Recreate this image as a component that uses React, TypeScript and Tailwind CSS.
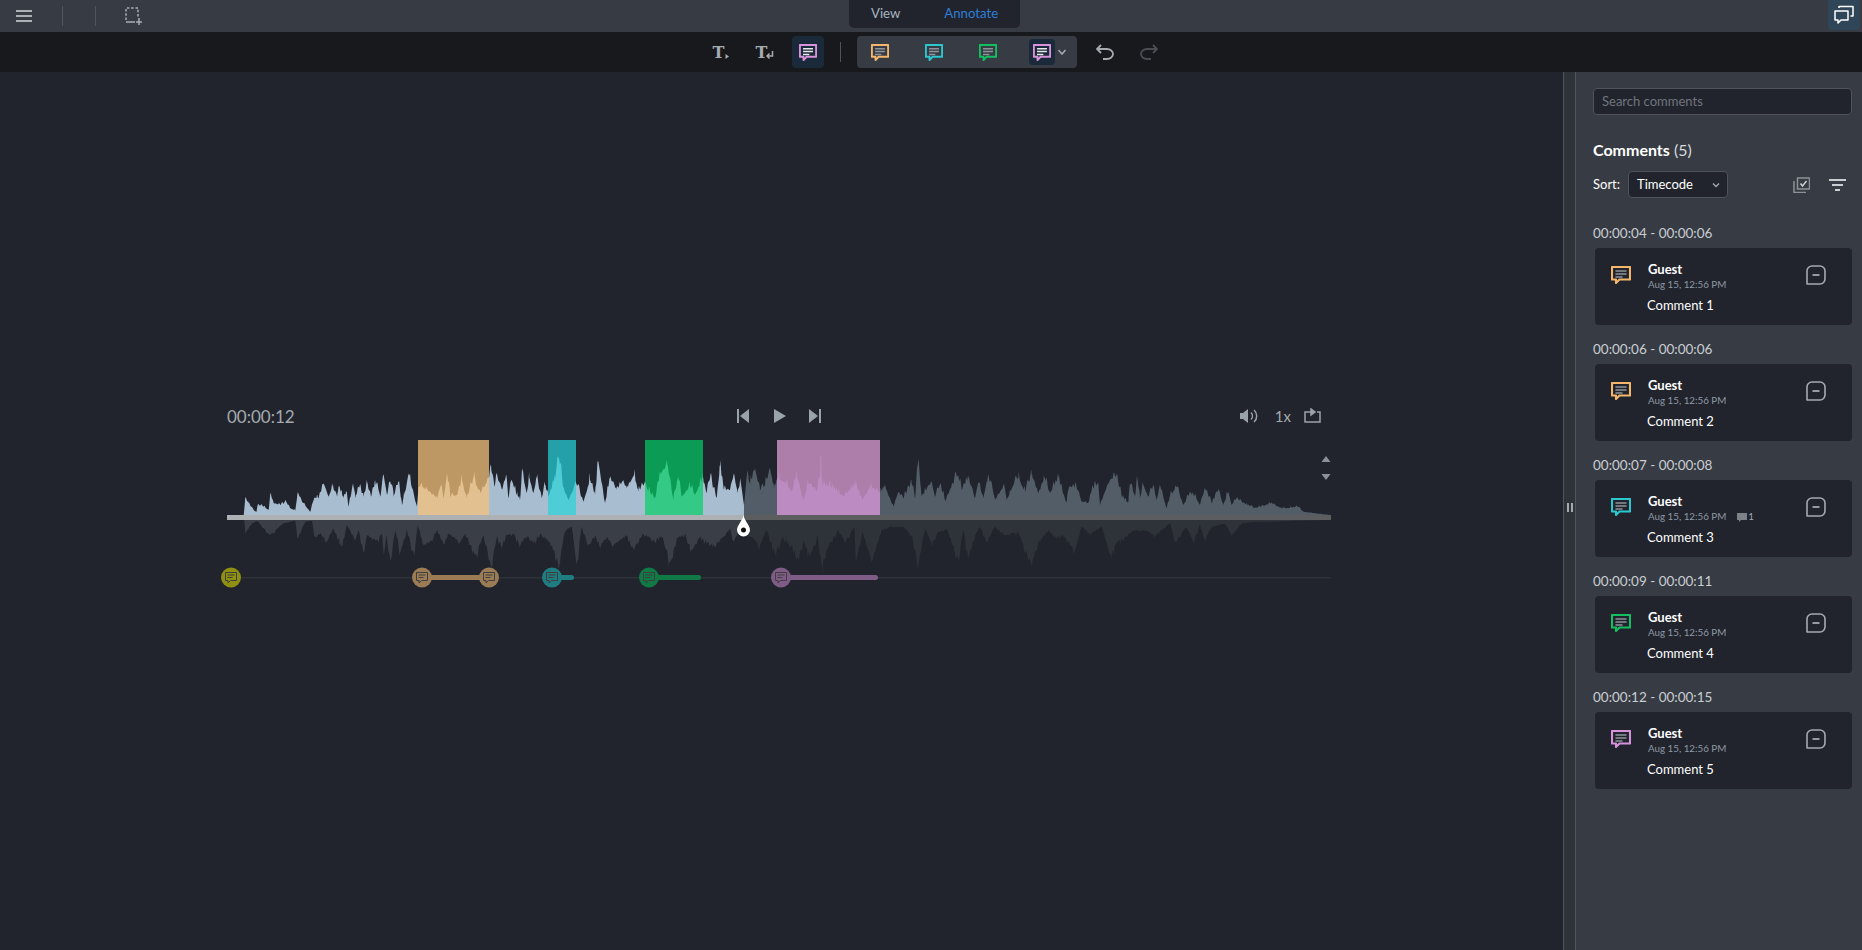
import { useMemo } from "react";

// comment list shown in the right panel
type CommentItem = {
  range: string;
  label: string;
  color: string;
  replies?: number;
};

const comments: CommentItem[] = [
  { range: "00:00:04 - 00:00:06", label: "Comment 1", color: "#f4b66a" },
  { range: "00:00:06 - 00:00:06", label: "Comment 2", color: "#f4b66a" },
  { range: "00:00:07 - 00:00:08", label: "Comment 3", color: "#2bc8d0", replies: 1 },
  { range: "00:00:09 - 00:00:11", label: "Comment 4", color: "#12c060" },
  { range: "00:00:12 - 00:00:15", label: "Comment 5", color: "#d892dc" },
];

const regions = [
  { x1: 418, x2: 489, top: "#bd9865", wave: "#e3c08f" },
  { x1: 548, x2: 576, top: "#23a0a8", wave: "#4fcdd6" },
  { x1: 645, x2: 703, top: "#0b9b54", wave: "#34c985" },
  { x1: 777, x2: 880, top: "#ad7eaa", wave: "#bb8bc1" },
];

const markers = [
  { x: 231, to: 231, color: "#8f8f10" },
  { x: 422, to: 488, color: "#9b7c55" },
  { x: 489, to: 489, color: "#9b7c55" },
  { x: 552, to: 574, color: "#1f7d82" },
  { x: 649, to: 701, color: "#0f7a45" },
  { x: 781, to: 878, color: "#7f5c86" },
];

const BASE = 515;
const PLAYHEAD = 744;

// wave outline, four stretches starting at the given x; pairs are [offset * 3, level * 3]
const topCrops: [number, number[]][] = [
  [227, [50,180,55,130,65,145,80,165,88,172,92,150,110,155,125,165,130,115,140,145,160,150,178,142,190,160,205,167,212,112,225,140,250,170,262,128,275,130,290,85,305,125,316,95,330,125,335,95,350,130,358,110,365,155,378,85,385,130,395,95,410,125,420,88,432,125,440,97,450,85,460,125,470,60,480,120,490,80,500,125,515,80,525,150,533,120,545,55,555,100,570,155,575,95,600,105,630,130,640,95,650,130,660,55,670,125,690,120,705,75,718,130,740,75,760,115,775,90,785,70,793,45,803,95,808,60,825,105,838,60]],
  [500, [25,130,35,75,50,120,60,135,67,50,80,115,88,68,100,115,110,70,125,130,135,90,145,125,165,70,178,15,190,100,205,135,215,115,228,85,250,140,270,75,285,120,295,18,315,145,330,70,350,105,368,80,380,100,402,60,415,110,435,85,445,110,465,130,480,60,502,30,520,135,535,65,545,125,570,95,585,120,608,70,620,115,630,70,650,130,660,35,672,105,690,105,702,55,712,115,722,80,732,150,740,65,750,90,765,40,780,105,795,95,810,40,822,100,832,70]],
  [775, [5,100,35,85,50,110,65,60,85,135,100,85,125,110,135,60,137,0,140,60,142,90,175,100,205,125,240,90,262,135,285,95,315,115,330,95,355,155,370,110,385,130,410,85,420,130,430,12,440,125,470,80,480,125,495,90,512,140,525,105,548,62,560,105,580,70,600,130,610,80,625,130,635,80,648,80,660,135,688,90,695,135,715,90,730,68,750,110,770,60,790,115,808,70,825,115,838,90]],
  [1055, [10,70,35,145,42,95,65,98,80,140,100,145,110,105,130,85,135,150,150,110,165,75,185,65,200,125,220,145,225,85,240,125,247,70,255,130,265,90,280,125,295,95,305,135,315,90,335,160,345,125,365,95,385,150,405,115,420,125,435,150,450,100,470,145,490,105,505,150,520,110,530,150,545,130,565,145,600,160,620,155,648,145,680,160,700,160,728,155,745,170,780,175,828,180]],
];

const bottomCrops: [number, number[]][] = [
  [227, [52,195,55,235,75,205,90,198,128,240,170,205,205,197,212,250,235,200,255,197,262,245,280,235,300,260,318,220,345,270,360,210,385,255,395,225,410,290,420,240,450,255,465,235,470,300,478,240,490,315,505,225,520,290,540,225,562,300,572,210,590,270,612,255,630,225,650,265,665,235,700,260,715,235,745,300,770,240,792,330,810,245,825,270,838,240]],
  [500, [40,235,60,265,80,240,100,260,120,235,150,260,178,325,195,225,215,215,230,330,245,215,265,270,285,240,300,270,320,245,340,270,380,240,400,280,430,235,460,255,485,240,512,320,530,250,555,235,575,285,600,245,640,270,670,245,690,220,700,260,720,225,760,250,780,270,800,225,825,290]],
  [775, [25,245,50,270,70,310,85,255,105,300,128,240,140,330,165,260,190,225,210,260,238,215,243,320,262,230,290,320,320,225,345,215,385,215,410,240,430,325,450,220,470,265,490,230,515,222,550,310,565,225,580,310,600,240,615,215,635,260,660,215,690,240,730,230,745,270,770,325,790,260,820,225,838,245]],
  [1055, [25,240,60,285,80,215,105,235,140,215,165,300,190,255,210,245,235,225,270,225,300,240,345,205,360,260,395,215,415,260,435,210,450,255,470,215,510,205,530,240,560,205,600,200,650,200,728,197,828,195]],
];

function rng(seed: number) {
  let a = seed;
  return () => {
    a = (a + 0x6d2b79f5) | 0;
    let t = Math.imul(a ^ (a >>> 15), 1 | a);
    t = (t + Math.imul(t ^ (t >>> 7), 61 | t)) ^ t;
    return ((t ^ (t >>> 14)) >>> 0) / 4294967296;
  };
}

function buildWave(crops: [number, number[]][], level: number, base: number, dir: number, seed: number) {
  const r = rng(seed);
  const pts: number[][] = [];
  let lastX = 0;
  crops.forEach(([x0, pairs]) => {
    for (let i = 0; i < pairs.length; i += 2) {
      const x = x0 + pairs[i] / 3;
      if (x > lastX) {
        pts.push([x, (dir * (level - pairs[i + 1])) / 3]);
        lastX = x;
      }
    }
  });
  let d = `M${pts[0][0].toFixed(1)} ${base}`;
  const tail = pts.length - 1;
  let toothStart = 0;
  let toothLen = 3;
  let toothAmp = 0;
  pts.forEach(([x, h], i) => {
    d += `L${x.toFixed(1)} ${(base - dir * h).toFixed(1)}`;
    if (i === tail) return;
    const [nx, nh] = pts[i + 1];
    const low = Math.min(h, nh);
    const high = Math.max(h, nh);
    for (let px = x + 0.5; px < nx; px += 0.5) {
      if (px - toothStart >= toothLen) {
        toothStart = px;
        toothLen = 1.5 + r() * 2.5;
        toothAmp = r();
      }
      const t = (px - x) / (nx - x);
      const up = nh > h ? t : 1 - t;
      const body = low + (high - low) * Math.pow(up, 1.1);
      // thin teeth so the outline stays spiky between the traced points
      const frac = (px - toothStart) / toothLen;
      const tooth = toothAmp * body * 0.3 * (1 - Math.abs(2 * frac - 1));
      d += `L${px.toFixed(2)} ${(base - dir * (body + tooth)).toFixed(1)}`;
    }
  });
  return d + `L1331 ${base}Z`;
}

function Bubble({
  color,
  lines = "#8f949a",
  w = 18,
  h = 17,
}: {
  color: string;
  lines?: string;
  w?: number;
  h?: number;
}) {
  return (
    <svg width={w} height={h} viewBox="0 0 20 18" fill="none" preserveAspectRatio="none">
      <path
        d="M1 1h18v12.500H8.500L5 17v-3.500H1Z"
        stroke={color}
        strokeWidth="2.100"
        strokeLinejoin="round"
      />
      <path d="M4.500 5h11M4.500 8h11M4.500 11h7" stroke={lines} strokeWidth="1.600" />
    </svg>
  );
}

function MinusBox() {
  return (
    <svg width="20" height="20" viewBox="0 0 20 20" fill="none" stroke="#a4aab0" strokeWidth="1.600">
      <path d="M1 19V6a5 5 0 0 1 5-5h8a5 5 0 0 1 5 5v8a5 5 0 0 1-5 5H1Z" strokeLinejoin="round" />
      <path d="M6.500 10h7" strokeWidth="1.800" />
    </svg>
  );
}

function CommentCard({ item }: { item: CommentItem }) {
  return (
    <div className="mb-[16px]">
      <div className="h-[23px] text-[13.5px] leading-[16px] text-[#c9ced3]">{item.range}</div>
      <div className="ml-[2px] flex h-[77px] w-[257px] rounded-[4px] bg-[#21242c] pl-[16px] pr-[26px] pt-[17px]">
        <div className="mt-[1px] w-[20px] shrink-0">
          <Bubble color={item.color} w={20} h={18} />
        </div>
        <div className="ml-[17px] mt-[-3px] flex-1">
          <div className="text-[13px] font-bold leading-[14px] text-white">Guest</div>
          <div className="mt-[2px] flex items-center text-[9.800px] leading-[13px] text-[#8e99a5]">
            <span>Aug 15, 12:56 PM</span>
            {item.replies ? (
              <span className="ml-[11px] flex items-center gap-[1px] text-[#a4aab0]">
                <svg width="10" height="10" viewBox="0 0 10 10" fill="#7d8288">
                  <path d="M0 1h10v7H4L2 10V8H0Z" />
                </svg>
                {item.replies}
              </span>
            ) : null}
          </div>
          <div className="ml-[-1px] mt-[6px] text-[13px] leading-[16px] text-white">{item.label}</div>
        </div>
        <MinusBox />
      </div>
    </div>
  );
}

function Waveform() {
  const top = useMemo(() => buildWave(topCrops, 180, BASE, 1, 11), []);
  const bottom = useMemo(() => buildWave(bottomCrops, 195, 520, -1, 29), []);
  return (
    <svg viewBox="227 431 1104 165" width="1104" height="165" className="block overflow-visible">
      <defs>
        <clipPath id="played">
          <rect x="227" y="431" width={PLAYHEAD - 227} height="165" />
        </clipPath>
        <clipPath id="rest">
          <rect x={PLAYHEAD} y="431" width={1331 - PLAYHEAD} height="165" />
        </clipPath>
        {regions.map((r, i) => (
          <clipPath id={`region-${i}`} key={r.x1}>
            <rect x={r.x1} y="440" width={r.x2 - r.x1} height="75" />
          </clipPath>
        ))}
      </defs>

      <path d={top} fill="#a9bdd0" clipPath="url(#played)" />
      <path d={top} fill="#525d68" clipPath="url(#rest)" />
      <path d={bottom} fill="#3a3f47" clipPath="url(#played)" />
      <path d={bottom} fill="#2e3239" clipPath="url(#rest)" />

      {regions.map((r, i) => (
        <g key={r.x1}>
          <rect x={r.x1} y="440" width={r.x2 - r.x1} height="75" fill={r.top} />
          <path d={top} fill={r.wave} clipPath={`url(#region-${i})`} />
        </g>
      ))}

      <rect x="227" y="515" width={PLAYHEAD - 227} height="5" fill="#aeb1b3" />
      <rect x={PLAYHEAD} y="515" width={1331 - PLAYHEAD} height="5" fill="#5b5d5e" />

      {/* playhead */}
      <path d="M743.500 515c1 6 6.500 10 6.500 15a6.500 6.500 0 0 1-13 0c0-5 5.500-9 6.500-15Z" fill="#fff" />
      <circle cx="743.500" cy="530" r="2.500" fill="#111" />

      {/* zoom arrows */}
      <path d="M1326 456l4.500 6h-9ZM1326 480l4.500-6h-9Z" fill="#8a9199" />

      {/* comment timeline */}
      <rect x="227" y="577" width="1104" height="1.500" fill="#2e3238" />
      {markers.map((m) => (
        <g key={m.x}>
          {m.to > m.x && <rect x={m.x} y="575" width={m.to - m.x} height="5" rx="2.500" fill={m.color} />}
          <circle cx={m.x} cy="577.500" r="10" fill={m.color} />
          <path
            d={`M${m.x - 5.500} ${572.500}h11v8h-6l-2.500 2.500v-2.500h-2.500Z M${m.x - 3.500} ${575}h7 M${m.x - 3.500} ${577.500}h5`}
            fill="none"
            stroke="#3f3f3f"
            strokeWidth="1"
          />
        </g>
      ))}
    </svg>
  );
}

export default function App() {
  return (
    <div className="flex h-[950px] w-[1862px] flex-col overflow-hidden bg-[#21242c] [font-family:Lato,sans-serif]">
      {/* top bar */}
      <div className="flex h-[32px] shrink-0 bg-[#373b43]">
        <div className="flex w-[849px] items-center pl-[16px]">
          <svg width="16" height="14" viewBox="0 0 16 14" fill="#aab0b6">
            <rect y="1" width="16" height="2" />
            <rect y="6" width="16" height="2" />
            <rect y="11" width="16" height="2" />
          </svg>
          <div className="ml-[30px] h-[20px] w-px bg-[#50545b]" />
          <div className="ml-[32px] h-[20px] w-px bg-[#50545b]" />
          <svg className="ml-[29px]" width="18" height="18" viewBox="0 0 18 18" fill="none" stroke="#aab0b6" strokeWidth="1.500">
            <path d="M1 13V1h12v9" strokeDasharray="2.500 1.800" />
            <path d="M1 15h9M14 11v7M11 15h6" />
          </svg>
        </div>
        <div className="flex h-[28px] w-[171px] items-center rounded-b-[5px] bg-[#21242c] pb-[1px] pl-[22px] text-[13.2px]">
          <span className="text-[#a7b4c2]">View</span>
          <span className="ml-[44px] text-[#2f7ed6]">Annotate</span>
        </div>
        <div className="flex flex-1 justify-end pr-[2px]">
          <div className="flex h-[30px] w-[32px] items-center justify-center rounded-b-[4px] bg-[#2f4558]">
            <svg width="20" height="20" viewBox="0 0 20 20" fill="none" stroke="#fff" strokeWidth="1.500">
              <path d="M1 6h13v9H7l-3 3v-3H1Z" strokeLinejoin="round" />
              <path d="M5 3V1.500h14V11h-2.500" strokeLinejoin="round" />
            </svg>
          </div>
        </div>
      </div>

      {/* annotate toolbar */}
      <div className="flex h-[40px] shrink-0 items-center bg-[#18191d] pl-[713px]">
        <svg className="overflow-visible" width="18" height="18" viewBox="0 0 18 18" fill="#a6abb0">
          <text x="-0.500" y="15" fontSize="16" fontWeight="bold" fontFamily="DejaVu Serif, serif">T</text>
          <path d="M12.500 11l3.500 2.500-3.500 2.500Z" />
        </svg>
        <svg className="ml-[25px] overflow-visible" width="18" height="18" viewBox="0 0 18 18" fill="#a6abb0">
          <text x="-0.500" y="15" fontSize="16" fontWeight="bold" fontFamily="DejaVu Serif, serif">T</text>
          <path d="M16.500 8v5h-5M13.500 10.500L11 13l2.500 2.500" fill="none" stroke="#a6abb0" strokeWidth="1.500" />
        </svg>
        <div className="ml-[18px] flex h-[32px] w-[32px] items-center justify-center rounded-[4px] bg-[#1a2a3a]">
          <Bubble color="#d892dc" lines="#e8e8e8" />
        </div>
        <div className="ml-[16px] h-[20px] w-px bg-[#50545b]" />
        <div className="ml-[16px] flex h-[32px] w-[220px] items-center rounded-[4px] bg-[#373b43] pl-[14px]">
          <Bubble color="#f4b66a" />
          <span className="w-[36px]" />
          <Bubble color="#2bc8d0" />
          <span className="w-[36px]" />
          <Bubble color="#12c060" />
          <div className="ml-[32px] flex h-[26px] w-[26px] items-center justify-center rounded-[4px] bg-[#1a2a3a]">
            <Bubble color="#d892dc" lines="#e8e8e8" />
          </div>
          <svg className="ml-[2px]" width="10" height="10" viewBox="0 0 10 10" fill="none" stroke="#a6abb0" strokeWidth="1.500">
            <path d="M1.500 3l3.500 4 3.500-4" />
          </svg>
        </div>
        <svg className="ml-[19px]" width="18" height="16" viewBox="0 0 18 16" fill="none" stroke="#a6abb0" strokeWidth="1.800">
          <path d="M5 1L1 5l4 4M1 5h10a6 5 0 0 1 0 10H7" />
        </svg>
        <svg className="ml-[26px]" width="18" height="16" viewBox="0 0 18 16" fill="none" stroke="#4a4e54" strokeWidth="1.800">
          <path d="M13 1l4 4-4 4M17 5H7a6 5 0 0 0 0 10h4" />
        </svg>
      </div>

      <div className="flex min-h-0 flex-1">
        {/* player area */}
        <div className="w-[1563px] shrink-0">
          <div className="ml-[227px] mt-[331px] w-[1104px]">
            <div className="mb-[2px] flex h-[26px] items-center text-[#a4aab0]">
              <div className="w-[510px] pt-[2px] text-[17px]">00:00:12</div>
              <svg width="12" height="14" viewBox="0 0 12 14" fill="#9aa2aa">
                <rect width="2" height="14" />
                <path d="M12 0v14L3 7Z" />
              </svg>
              <svg className="ml-[25px]" width="12" height="14" viewBox="0 0 12 14" fill="#9aa2aa">
                <path d="M0 0v14l12-7Z" />
              </svg>
              <svg className="ml-[23px]" width="12" height="14" viewBox="0 0 12 14" fill="#9aa2aa">
                <path d="M0 0v14l9-7Z" />
                <rect x="10" width="2" height="14" />
              </svg>
              <div className="ml-auto flex items-center pr-[10px]">
                <svg width="18" height="16" viewBox="0 0 18 16" fill="#9aa2aa">
                  <path d="M0 5h3l5-4v14l-5-4H0Z" />
                  <path d="M11 4.500a5 5 0 0 1 0 7M14 2a8 8 0 0 1 0 12" fill="none" stroke="#9aa2aa" strokeWidth="1.500" />
                </svg>
                <span className="ml-[17px] text-[15px]">1x</span>
                <svg className="ml-[13px]" width="17" height="16" viewBox="0 0 17 16" fill="none" stroke="#9aa2aa" strokeWidth="1.500">
                  <path d="M8 4H1v10h15V4h-3" />
                  <path d="M7 1v6l4-3Z" fill="#9aa2aa" />
                </svg>
              </div>
            </div>
            <Waveform />
          </div>
        </div>

        {/* resize handle */}
        <div className="flex w-[13px] shrink-0 items-center justify-center border-x border-[#50545b] bg-[#2e3239] pb-[7px]">
          <div className="flex gap-[2px]">
            <div className="h-[9px] w-[2px] bg-[#a4aab0]" />
            <div className="h-[9px] w-[2px] bg-[#a4aab0]" />
          </div>
        </div>

        {/* comments panel */}
        <div className="flex-1 bg-[#373b43] pl-[17px] pr-[11px] pt-[16px]">
          <input
            readOnly
            placeholder="Search comments"
            className="block h-[27px] w-full rounded-[4px] border border-[#4e535b] bg-[#21242c] px-[8px] pb-[2px] text-[13px] outline-none placeholder:text-[#70757c]"
          />
          <div className="mt-[25px] h-[20px] text-[16px] leading-[20px] text-white">
            <span className="font-bold">Comments</span> <span className="text-[#d6dade]">(5)</span>
          </div>
          <div className="mt-[11px] flex h-[27px] items-center text-[13px] text-white">
            <span className="pt-[1px]">Sort:</span>
            <div className="ml-[8px] flex h-[27px] w-[100px] items-center justify-between rounded-[4px] border border-[#4e535b] bg-[#21242c] pl-[8px] pr-[6px]">
              <span>Timecode</span>
              <svg width="10" height="10" viewBox="0 0 10 10" fill="none" stroke="#a6abb0" strokeWidth="1.300">
                <path d="M2 3.500l3 3 3-3" />
              </svg>
            </div>
            <svg className="ml-[65px]" width="17" height="16" viewBox="0 0 17 16" fill="none" stroke="#8c9298" strokeWidth="1.500">
              <path d="M4.500 1h12v11h-12Z" />
              <path d="M1 4v11.500h12" />
              <path d="M7.500 6.500l2 2.500 4-5" stroke="#c9ced3" />
            </svg>
            <svg className="ml-[19px]" width="17" height="12" viewBox="0 0 17 12" fill="#c9ced3">
              <rect width="17" height="2" y="0" />
              <rect width="11" height="2" x="3" y="5" />
              <rect width="5" height="2" x="6" y="10" />
            </svg>
          </div>
          <div className="mt-[27px]">
            {comments.map((c) => (
              <CommentCard key={c.label} item={c} />
            ))}
          </div>
        </div>
      </div>
    </div>
  );
}
